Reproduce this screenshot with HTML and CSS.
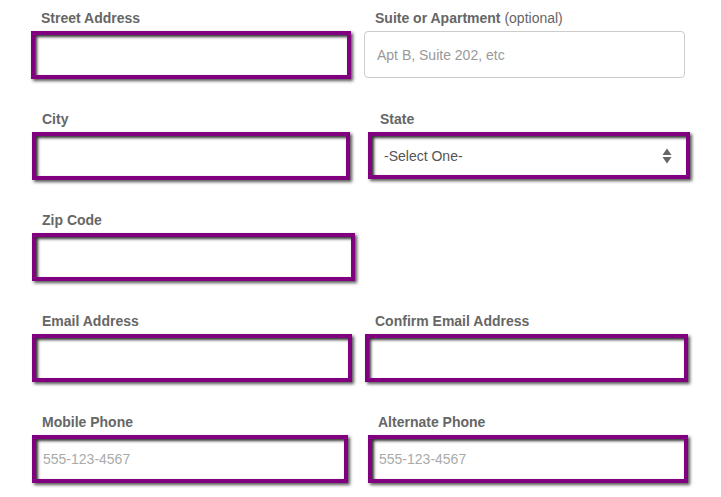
FILE: index.html
```html
<!DOCTYPE html>
<html>
<head>
<meta charset="utf-8">
<link rel="stylesheet" href="styles.css">
</head>
<body>
<form class="form">
  <div class="row">
    <div class="field field-left">
      <label class="label">Street Address</label>
      <input class="box" type="text">
    </div>
    <div class="field field-suite">
      <label class="label">Suite or Apartment <span class="opt">(optional)</span></label>
      <input class="plain" type="text" placeholder="Apt B, Suite 202, etc">
    </div>
  </div>
  <div class="row">
    <div class="field field-left field-city">
      <label class="label">City</label>
      <input class="box" type="text">
    </div>
    <div class="field field-state">
      <label class="label">State</label>
      <div class="box select">
        <span class="select-text">-Select One-</span>
        <svg class="arrows" width="10" height="18" viewBox="0 0 10 18"><path d="M5 1.5 L9.5 8 L0.5 8 Z" fill="#666"/><path d="M0.5 10 L9.5 10 L5 16.5 Z" fill="#666"/></svg>
      </div>
    </div>
  </div>
  <div class="row">
    <div class="field field-left field-zip">
      <label class="label">Zip Code</label>
      <input class="box" type="text">
    </div>
  </div>
  <div class="row">
    <div class="field field-left field-email">
      <label class="label">Email Address</label>
      <input class="box" type="text">
    </div>
    <div class="field field-confirm">
      <label class="label">Confirm Email Address</label>
      <input class="box" type="text">
    </div>
  </div>
  <div class="row">
    <div class="field field-left field-mobile">
      <label class="label">Mobile Phone</label>
      <input class="box" type="text" placeholder="555-123-4567">
    </div>
    <div class="field field-alt">
      <label class="label">Alternate Phone</label>
      <input class="box" type="text" placeholder="555-123-4567">
    </div>
  </div>
</form>
</body>
</html>
```
FILE: styles.css
```css
html, body {
  margin: 0;
  padding: 0;
  background: #fff;
}
body {
  font-family: "Liberation Sans", Arial, sans-serif;
  width: 721px;
  height: 497px;
  overflow: hidden;
}
.form {
  padding-top: 10px;
}
.row {
  display: flex;
  height: 101px;
}
.field {
  display: flex;
  flex-direction: column;
}
.label {
  font-size: 14px;
  line-height: 16px;
  font-weight: bold;
  color: #666;
  margin-bottom: 5px;
  padding-left: 10px;
  white-space: nowrap;
}
.opt {
  font-weight: normal;
}
.field-left {
  margin-left: 31px;
  width: 320px;
}
.field-city { margin-left: 32px; width: 318px; }
.field-zip { margin-left: 32px; width: 323px; }
.field-email { margin-left: 32px; width: 320px; }
.field-mobile { margin-left: 32px; width: 316px; }
.field-suite { margin-left: 13px; width: 321px; }
.field-suite .label { padding-left: 11px; }
.field-state { margin-left: 18px; width: 322px; }
.field-state .label { padding-left: 12px; }
.field-confirm { margin-left: 13px; width: 323px; }
.field-alt { margin-left: 20px; width: 320px; }
.box {
  box-sizing: border-box;
  height: 48px;
  width: 100%;
  margin: 0;
  border: 4px solid #800080;
  background: #fff;
  box-shadow: inset 2px 2px 3px #333, 2px 2px 3px #555;
  padding: 0 7px;
  font-family: "Liberation Sans", Arial, sans-serif;
  font-size: 14px;
  color: #555;
  outline: none;
}
.box::placeholder {
  color: #aaa;
}
.plain {
  box-sizing: border-box;
  height: 47px;
  width: 100%;
  margin: 0;
  border: 1px solid #ccc;
  border-radius: 4px;
  background: #fff;
  padding: 0 12px;
  font-family: "Liberation Sans", Arial, sans-serif;
  font-size: 14px;
  outline: none;
}
.plain::placeholder {
  color: #999;
}
.select {
  display: flex;
  align-items: center;
  justify-content: space-between;
  padding: 0 14px 0 12px;
  height: 47px;
}
.select-text {
  color: #555;
  font-size: 14px;
}
.arrows {
  display: block;
}
```
